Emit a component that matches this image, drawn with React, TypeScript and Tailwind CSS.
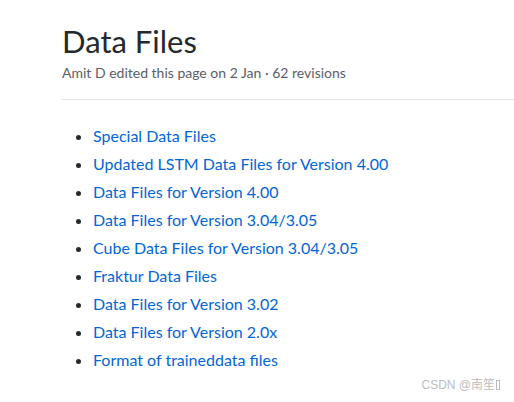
import React from 'react';

const pages = [
  'Special Data Files',
  'Updated LSTM Data Files for Version 4.00',
  'Data Files for Version 4.00',
  'Data Files for Version 3.04/3.05',
  'Cube Data Files for Version 3.04/3.05',
  'Fraktur Data Files',
  'Data Files for Version 3.02',
  'Data Files for Version 2.0x',
  'Format of traineddata files',
];

export default function App() {
  return (
    <div
      className="relative w-[514px] h-[402px] overflow-hidden bg-white text-[#24292e]"
      style={{ fontFamily: '"Segoe UI", Lato, "Noto Sans", sans-serif' }}
    >
      <div className="pl-[62px] pt-[21px]">
        <h1 className="text-[31px] leading-[40px] font-normal">Data Files</h1>
        <div className="text-[14px] leading-[20px] text-[#586069] mt-[2px]">
          Amit D edited this page on 2 Jan · 62 revisions
        </div>
        <div className="mt-[16px] border-b border-[#e1e4e8]" />
        <ul className="mt-[22px] pl-[31px] list-disc text-[16px] leading-[28px]">
          {pages.map((p) => (
            <li key={p} className="marker:text-[#24292e]">
              <a href="#" className="text-[#0366d6]">{p}</a>
            </li>
          ))}
        </ul>
      </div>
      <div
        className="absolute right-[14px] bottom-[8px] flex items-center text-[12px] text-[#bdbdbd]"
        style={{ fontFamily: 'Arial, "Liberation Sans", "Noto Sans CJK SC", sans-serif' }}
      >
        CSDN @南笙
        <span className="inline-block w-[4px] h-[10px] border border-[#bdbdbd] ml-[1px]" />
      </div>
    </div>
  );
}
